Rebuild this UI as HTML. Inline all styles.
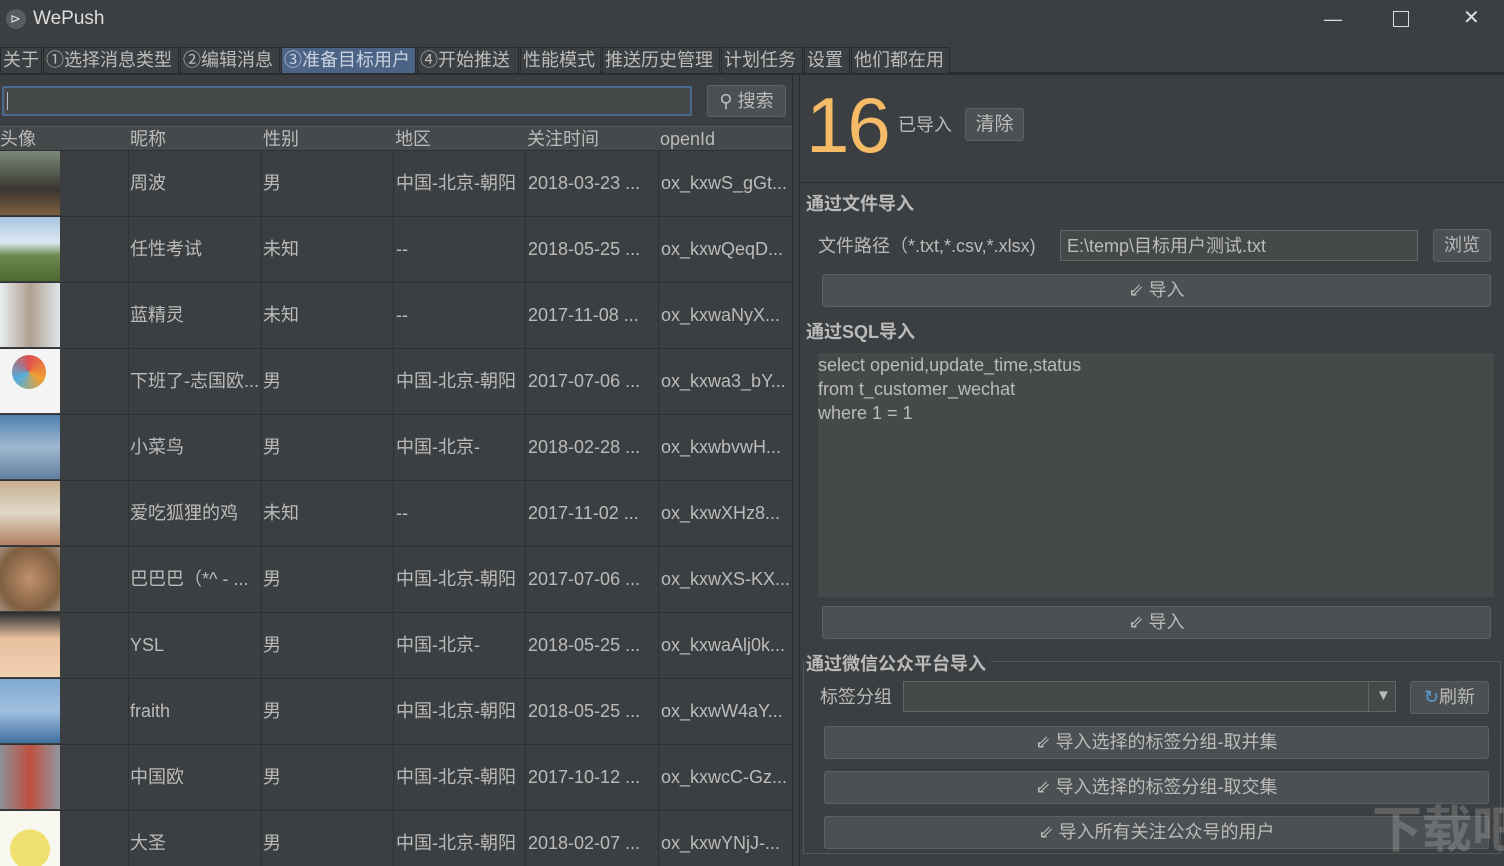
<!DOCTYPE html><html><head><meta charset="utf-8"><style>
*{box-sizing:border-box;margin:0;padding:0}
html{overflow:hidden;height:866px}
body{width:1504px;height:866px;background:#3c3f41;font-family:"Liberation Sans","Noto Sans CJK SC",sans-serif;color:#bbbbbb;position:relative;overflow:hidden;font-size:18px;line-height:24px}
.a{position:absolute;white-space:nowrap}
.tab{position:absolute;top:47px;height:26px;background:#3c3f41;border:1px solid #2b2b2b;border-bottom:none;font-size:18px;line-height:24px;padding:0 2px;color:#bbb}
.btn{position:absolute;background:#4c5052;border:1px solid #5e6060;border-radius:3px;text-align:center;color:#bbb;font-size:18px}
.col{position:absolute;top:151px;height:715px;border-left:1px solid #2f3133}
.row{position:absolute;left:0;width:792px;height:66px;border-bottom:1px solid #2f3133}
.cell{position:absolute;top:20px;font-size:18px;line-height:24px;height:24px;color:#bbb;white-space:nowrap}
.av{position:absolute;left:0;width:60px;height:64px}
</style></head><body>
<div class="a" style="left:6px;top:9px;width:20px;height:20px;border-radius:50%;background:#5a5d5f"></div>
<div class="a" style="left:10px;top:7px;font-size:13px;color:#ddd">⊳</div>
<div class="a" style="left:33px;top:7px;font-size:19px;color:#ddd">WePush</div>
<div class="a" style="left:1324px;top:7px;font-size:18px;color:#ddd">—</div>
<div class="a" style="left:1393px;top:11px;width:16px;height:16px;border:1.5px solid #ddd"></div>
<div class="a" style="left:1463px;top:6px;font-size:20px;color:#ddd">✕</div>
<div class="a" style="left:0;top:72px;width:1504px;height:3px;background:#2b2d2f"></div>
<div class="tab" style="left:0;width:42px">关于</div>
<div class="tab" style="left:43px;width:136px">①选择消息类型</div>
<div class="tab" style="left:180px;width:100px">②编辑消息</div>
<div class="tab" style="left:281px;width:135px;background:#4b6385;color:#c9d3e0">③准备目标用户</div>
<div class="tab" style="left:417px;width:102px">④开始推送</div>
<div class="tab" style="left:520px;width:81px">性能模式</div>
<div class="tab" style="left:602px;width:118px">推送历史管理</div>
<div class="tab" style="left:721px;width:82px">计划任务</div>
<div class="tab" style="left:804px;width:46px">设置</div>
<div class="tab" style="left:851px;width:99px">他们都在用</div>
<!-- left -->
<div class="a" style="left:2px;top:86px;width:690px;height:30px;background:#45494a;border:2px solid #4a6b8f;border-radius:2px"></div>
<div class="a" style="left:7px;top:92px;width:1px;height:18px;background:#bbb"></div>
<div class="btn" style="left:707px;top:85px;width:79px;height:32px;line-height:30px">⚲ 搜索</div>
<div class="a" style="left:0;top:126px;width:792px;height:25px;background:#46494b;border-top:1px solid #555;border-bottom:1px solid #2f3133"></div>
<div class="a" style="left:0;top:127px">头像</div>
<div class="a" style="left:130px;top:127px">昵称</div>
<div class="a" style="left:263px;top:127px">性别</div>
<div class="a" style="left:395px;top:127px">地区</div>
<div class="a" style="left:527px;top:127px">关注时间</div>
<div class="a" style="left:660px;top:127px">openId</div>
<div class="col" style="left:128px"></div><div class="col" style="left:261px"></div><div class="col" style="left:393px"></div><div class="col" style="left:525px"></div><div class="col" style="left:658px"></div>
<div style="position:absolute;left:0;top:151px">
<div class="row" style="top:0"><div class="av" style="background:linear-gradient(#7a8a7a,#3a3530 60%,#806040)"></div><div class="cell" style="left:130px">周波</div><div class="cell" style="left:263px">男</div><div class="cell" style="left:396px">中国-北京-朝阳</div><div class="cell" style="left:528px">2018-03-23 ...</div><div class="cell" style="left:661px">ox_kxwS_gGt...</div></div>
<div class="row" style="top:66px"><div class="av" style="background:linear-gradient(#a8c4e0,#dde8f0 40%,#6a8a50 60%,#4a6a30)"></div><div class="cell" style="left:130px">任性考试</div><div class="cell" style="left:263px">未知</div><div class="cell" style="left:396px">--</div><div class="cell" style="left:528px">2018-05-25 ...</div><div class="cell" style="left:661px">ox_kxwQeqD...</div></div>
<div class="row" style="top:132px"><div class="av" style="background:linear-gradient(90deg,#e8eef2,#b0a090 50%,#dfe6ea)"></div><div class="cell" style="left:130px">蓝精灵</div><div class="cell" style="left:263px">未知</div><div class="cell" style="left:396px">--</div><div class="cell" style="left:528px">2017-11-08 ...</div><div class="cell" style="left:661px">ox_kxwaNyX...</div></div>
<div class="row" style="top:198px"><div class="av" style="background:#f4f4f4"><div style="position:absolute;left:12px;top:6px;width:34px;height:34px;border-radius:50%;background:conic-gradient(#e05050,#f0a030,#50b0e0,#e05050)"></div></div><div class="cell" style="left:130px">下班了-志国欧...</div><div class="cell" style="left:263px">男</div><div class="cell" style="left:396px">中国-北京-朝阳</div><div class="cell" style="left:528px">2017-07-06 ...</div><div class="cell" style="left:661px">ox_kxwa3_bY...</div></div>
<div class="row" style="top:264px"><div class="av" style="background:linear-gradient(#5080b0,#a0b8d0 50%,#6080a0)"></div><div class="cell" style="left:130px">小菜鸟</div><div class="cell" style="left:263px">男</div><div class="cell" style="left:396px">中国-北京-</div><div class="cell" style="left:528px">2018-02-28 ...</div><div class="cell" style="left:661px">ox_kxwbvwH...</div></div>
<div class="row" style="top:330px"><div class="av" style="background:linear-gradient(#c8b090,#e0d8c8 50%,#b08060)"></div><div class="cell" style="left:130px">爱吃狐狸的鸡</div><div class="cell" style="left:263px">未知</div><div class="cell" style="left:396px">--</div><div class="cell" style="left:528px">2017-11-02 ...</div><div class="cell" style="left:661px">ox_kxwXHz8...</div></div>
<div class="row" style="top:396px"><div class="av" style="background:radial-gradient(#c09070,#806040 70%,#a09080)"></div><div class="cell" style="left:130px">巴巴巴（*^ - ...</div><div class="cell" style="left:263px">男</div><div class="cell" style="left:396px">中国-北京-朝阳</div><div class="cell" style="left:528px">2017-07-06 ...</div><div class="cell" style="left:661px">ox_kxwXS-KX...</div></div>
<div class="row" style="top:462px"><div class="av" style="background:linear-gradient(#303030,#e8c0a0 40%,#f0d0b0)"></div><div class="cell" style="left:130px">YSL</div><div class="cell" style="left:263px">男</div><div class="cell" style="left:396px">中国-北京-</div><div class="cell" style="left:528px">2018-05-25 ...</div><div class="cell" style="left:661px">ox_kxwaAlj0k...</div></div>
<div class="row" style="top:528px"><div class="av" style="background:linear-gradient(#80a8d0,#a0c0e0 50%,#4070a0)"></div><div class="cell" style="left:130px">fraith</div><div class="cell" style="left:263px">男</div><div class="cell" style="left:396px">中国-北京-朝阳</div><div class="cell" style="left:528px">2018-05-25 ...</div><div class="cell" style="left:661px">ox_kxwW4aY...</div></div>
<div class="row" style="top:594px"><div class="av" style="background:linear-gradient(90deg,#8a9098,#c05040 50%,#9098a0)"></div><div class="cell" style="left:130px">中国欧</div><div class="cell" style="left:263px">男</div><div class="cell" style="left:396px">中国-北京-朝阳</div><div class="cell" style="left:528px">2017-10-12 ...</div><div class="cell" style="left:661px">ox_kxwcC-Gz...</div></div>
<div class="row" style="top:660px"><div class="av" style="background:radial-gradient(circle at 50% 60%,#f0e070 40%,#f8f8f0 42%)"></div><div class="cell" style="left:130px">大圣</div><div class="cell" style="left:263px">男</div><div class="cell" style="left:396px">中国-北京-朝阳</div><div class="cell" style="left:528px">2018-02-07 ...</div><div class="cell" style="left:661px">ox_kxwYNjJ-...</div></div>
</div>
<div class="a" style="left:792px;top:75px;width:8px;height:791px;background:#3c3f41;border-left:1px solid #2b2b2b;border-right:1px solid #2b2b2b"></div>
<!-- right -->
<div class="a" style="left:806px;top:80px;font-size:78px;color:#f5bb66;letter-spacing:-2px;line-height:90px">16</div>
<div class="a" style="left:898px;top:113px">已导入</div>
<div class="btn" style="left:965px;top:108px;width:59px;height:33px;line-height:31px;font-size:19px">清除</div>
<div class="a" style="left:800px;top:182px;width:704px;height:1px;background:#2b2b2b"></div>
<div class="a" style="left:806px;top:192px;font-weight:bold">通过文件导入</div>
<div class="a" style="left:818px;top:234px">文件路径（*.txt,*.csv,*.xlsx)</div>
<div class="a" style="left:1060px;top:230px;width:358px;height:31px;background:#45494a;border:1px solid #646464;padding:3px 6px">E:\temp\目标用户测试.txt</div>
<div class="btn" style="left:1433px;top:229px;width:58px;height:33px;line-height:31px">浏览</div>
<div class="btn" style="left:822px;top:274px;width:669px;height:33px;line-height:31px">⇙ 导入</div>
<div class="a" style="left:806px;top:320px;font-weight:bold">通过SQL导入</div>
<div class="a" style="left:818px;top:353px;width:676px;height:244px;background:#45494a;padding:0;line-height:24px">select openid,update_time,status<br>from t_customer_wechat<br>where 1 = 1</div>
<div class="btn" style="left:822px;top:606px;width:669px;height:33px;line-height:31px">⇙ 导入</div>
<div class="a" style="left:803px;top:661px;width:698px;height:193px;border:1px solid #555"></div>
<div class="a" style="left:806px;top:652px;font-weight:bold;background:#3c3f41;padding-right:4px">通过微信公众平台导入</div>
<div class="a" style="left:820px;top:685px">标签分组</div>
<div class="a" style="left:903px;top:681px;width:493px;height:31px;background:#45494a;border:1px solid #646464"></div>
<div class="a" style="left:1368px;top:682px;width:1px;height:29px;background:#646464"></div>
<div class="a" style="left:1376px;top:684px;font-size:15px">▼</div>
<div class="btn" style="left:1410px;top:681px;width:79px;height:33px;line-height:31px"><span style="color:#5aa0d8">↻</span>刷新</div>
<div class="btn" style="left:824px;top:726px;width:665px;height:33px;line-height:31px">⇙ 导入选择的标签分组-取并集</div>
<div class="btn" style="left:824px;top:771px;width:665px;height:33px;line-height:31px">⇙ 导入选择的标签分组-取交集</div>
<div class="btn" style="left:824px;top:816px;width:665px;height:33px;line-height:31px">⇙ 导入所有关注公众号的用户</div>
<div class="a" style="left:1372px;top:800px;font-size:50px;line-height:60px;color:rgba(255,255,255,0.18);font-weight:bold">下载吧</div>
</body></html>
